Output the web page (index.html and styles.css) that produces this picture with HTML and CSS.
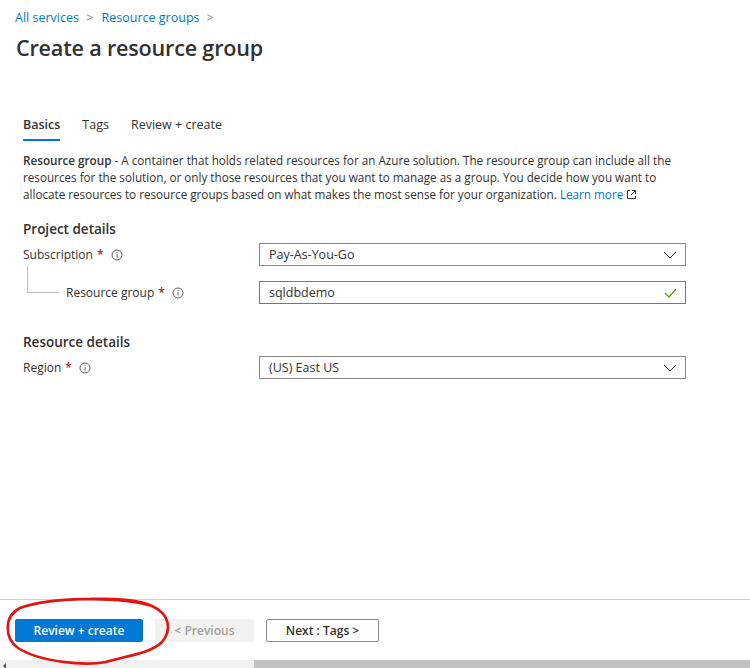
FILE: index.html
```html
<!DOCTYPE html>
<html lang="en">
<head>
    <meta charset="UTF-8">
    <title>Create a resource group</title>
    <link rel="stylesheet" href="styles.css">
</head>
<body>

    <div class="page">
        <div class="content">
            <!-- BREADCRUMB -->
            <nav class="crumbs">
                <a href="#">All services</a>
                <span class="sep">&gt;</span>
                <a href="#">Resource groups</a>
                <span class="sep">&gt;</span>
            </nav>
            <h1>Create a resource group</h1>

            <!-- TABS -->
            <div class="tabs">
                <span class="tab active">Basics</span>
                <span class="tab">Tags</span>
                <span class="tab">Review + create</span>
            </div>

            <p class="intro"><strong>Resource group</strong> - A container that holds related resources for an Azure solution. The resource group can include all the resources for the solution, or only those resources that you want to manage as a group. You decide how you want to allocate resources to resource groups based on what makes the most sense for your organization. <a href="#">Learn more</a><svg class="ext" width="11" height="11" viewBox="0 0 11 11"><path d="M4 1.5H1.5v8h8V7" fill="none" stroke="#323130"/><path d="M6 1.5h3.5V5M9.5 1.5 5 6" fill="none" stroke="#323130"/></svg></p>

            <!-- PROJECT DETAILS -->
            <h2>Project details</h2>
            <div class="row">
                <label class="label">Subscription <span class="req">*</span> <svg class="info" width="12" height="12" viewBox="0 0 12 12"><circle cx="6" cy="6" r="5" fill="none" stroke="#605e5c"/><path d="M6 5.2v3.4" stroke="#605e5c"/><circle cx="6" cy="3.6" r=".6" fill="#605e5c"/></svg></label>
                <div class="field select">
                    <span>Pay-As-You-Go</span>
                    <svg width="14" height="8" viewBox="0 0 14 8"><path d="M1 1l6 6 6-6" fill="none" stroke="#323130"/></svg>
                </div>
            </div>
            <div class="row nested">
                <label class="label"><span class="tree"></span>Resource group <span class="req">*</span> <svg class="info" width="12" height="12" viewBox="0 0 12 12"><circle cx="6" cy="6" r="5" fill="none" stroke="#605e5c"/><path d="M6 5.2v3.4" stroke="#605e5c"/><circle cx="6" cy="3.6" r=".6" fill="#605e5c"/></svg></label>
                <div class="field input valid">
                    <span>sqldbdemo</span>
                    <svg width="13" height="10" viewBox="0 0 13 10"><path d="M1 5l4 4 7-8" fill="none" stroke="#57a300" stroke-width="1.2"/></svg>
                </div>
            </div>

            <!-- RESOURCE DETAILS -->
            <h2 class="second">Resource details</h2>
            <div class="row">
                <label class="label">Region <span class="req">*</span> <svg class="info" width="12" height="12" viewBox="0 0 12 12"><circle cx="6" cy="6" r="5" fill="none" stroke="#605e5c"/><path d="M6 5.2v3.4" stroke="#605e5c"/><circle cx="6" cy="3.6" r=".6" fill="#605e5c"/></svg></label>
                <div class="field select">
                    <span>(US) East US</span>
                    <svg width="14" height="8" viewBox="0 0 14 8"><path d="M1 1l6 6 6-6" fill="none" stroke="#323130"/></svg>
                </div>
            </div>
        </div>

        <!-- FOOTER BUTTONS -->
        <footer class="actions">
            <button class="btn primary">Review + create</button>
            <button class="btn disabled">&lt; Previous</button>
            <button class="btn outline">Next : Tags &gt;</button>
        </footer>

        <div class="hscroll">
            <span class="arrow"></span>
            <span class="thumb"></span>
        </div>

        <!-- hand drawn highlight -->
        <svg class="scribble" width="180" height="80" viewBox="0 0 180 80">
            <path d="M150 12 C118 2, 48 3, 18 14 C2 22, 2 44, 16 54 C38 68, 82 72, 104 68 C122 62, 148 60, 160 48 C170 36, 168 20, 150 12 C138 6, 110 4, 90 5" fill="none" stroke="#e3140f" stroke-width="2.6" stroke-linecap="round"/>
        </svg>
    </div>

</body>
</html>
```

FILE: styles.css
```css
/* --- General --- */
body {
    margin: 0;
    font-family: 'Open Sans', 'Noto Sans', sans-serif;
    color: #323130;
    background: #fff;
}

.page {
    position: relative;
    width: 750px;
    height: 668px;
    display: flex;
    flex-direction: column;
    overflow: hidden;
}

.content {
    flex: 1;
}

a {
    color: #0078d4;
    text-decoration: none;
}

/* --- Header --- */
.crumbs {
    padding: 9px 0 0 15px;
    font-size: 12.5px;
    line-height: 18px;
}
.crumbs .sep {
    color: #8a8886;
    margin: 0 5px 0 4px;
}

h1 {
    margin: 7px 0 0 16px;
    font-size: 21.6px;
    font-weight: 600;
    line-height: 28px;
    letter-spacing: -0.2px;
}

/* --- Tabs --- */
.tabs {
    display: flex;
    gap: 22px;
    margin: 54px 0 0 23px;
}
.tab {
    font-size: 12.5px;
    line-height: 18px;
    padding-bottom: 5px;
    border-bottom: 2px solid transparent;
}
.tab.active {
    font-weight: 600;
    border-bottom-color: #0078d4;
}

/* --- Intro text --- */
.intro {
    margin: 11px 0 0 23px;
    width: 660px;
    font-size: 11.7px;
    line-height: 17px;
}
.intro strong {
    font-weight: 600;
}
.ext {
    margin-left: 3px;
    vertical-align: -1px;
}

/* --- Form --- */
h2 {
    margin: 16px 0 0 23px;
    font-size: 13.5px;
    font-weight: 600;
    line-height: 20px;
}
h2.second {
    margin-top: 28px;
}

.row {
    display: grid;
    grid-template-columns: 236px 427px;
    align-items: center;
    margin: 4px 0 0 23px;
}
.row.nested {
    margin-top: 15px;
}

.label {
    font-size: 12px;
    line-height: 18px;
    display: flex;
    align-items: center;
}
.req {
    color: #a4262c;
    font-weight: 600;
    margin: 0 6px 0 4px;
}
.info {
    margin-left: 1px;
}

.nested .label {
    position: relative;
    padding-left: 43px;
}
.tree {
    position: absolute;
    left: 4px;
    bottom: 9px;
    width: 31px;
    height: 26px;
    border-left: 1px solid #bebbb8;
    border-bottom: 1px solid #bebbb8;
}

.field {
    height: 23px;
    box-sizing: border-box;
    border: 1px solid #8a8886;
    padding: 0 8px 0 9px;
    display: flex;
    align-items: center;
    justify-content: space-between;
    font-size: 12.5px;
}
.field.valid {
    border-color: #a64fc7;
}

/* --- Footer --- */
.actions {
    display: flex;
    gap: 12px;
    border-top: 1px solid #d2d0ce;
    padding: 19px 15px 18px;
}
.btn {
    height: 23px;
    box-sizing: border-box;
    font-family: inherit;
    font-size: 12px;
    font-weight: 600;
    border-radius: 2px;
    padding: 0;
}
.btn.primary {
    width: 128px;
    background: #0078d4;
    border: 1px solid #0078d4;
    color: #fff;
}
.btn.disabled {
    width: 99px;
    background: #f3f2f1;
    border: 1px solid #f3f2f1;
    color: #a19f9d;
}
.btn.outline {
    width: 113px;
    background: #fff;
    border: 1px solid #8a8886;
    color: #323130;
}

/* --- Horizontal scrollbar --- */
.hscroll {
    height: 8px;
    display: flex;
    background: #f0f0f0;
}
.hscroll .arrow {
    width: 254px;
    position: relative;
}
.hscroll .arrow::before {
    content: "";
    position: absolute;
    left: 3px;
    top: 3px;
    border-right: 3px solid #505050;
    border-top: 3px solid transparent;
    border-bottom: 3px solid transparent;
}
.hscroll .thumb {
    flex: 1;
    background: #c1c1c1;
}

/* --- Red highlight around the primary button --- */
.scribble {
    position: absolute;
    left: 2px;
    top: 594px;
    pointer-events: none;
}
```
